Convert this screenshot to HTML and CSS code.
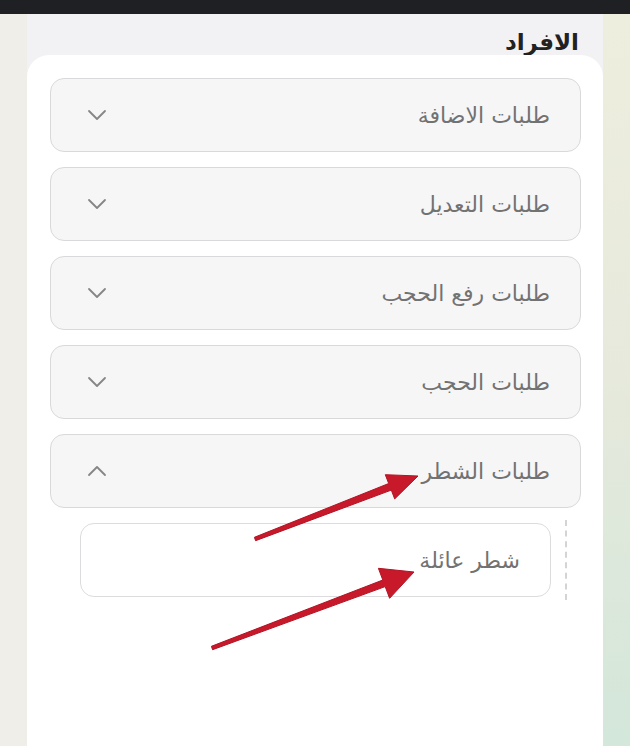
FILE: index.html
```html
<!DOCTYPE html>
<html dir="rtl" lang="ar">
<head>
	<meta charset="utf-8">
	<link rel="stylesheet" href="styles.css">
</head>
<body>
	<div class="statusBar"></div>

	<div class="screen">
		<div class="sideLeft"></div>

		<div class="panel">
			<h1 class="title">الافراد</h1>

			<div class="card">
				<div class="list">
					<div class="item">
						<span class="label">طلبات الاضافة</span>
						<svg class="chev" width="20" height="12" viewBox="0 0 20 12"><polyline points="2,2 10,10 18,2" /></svg>
					</div>
					<div class="item">
						<span class="label">طلبات التعديل</span>
						<svg class="chev" width="20" height="12" viewBox="0 0 20 12"><polyline points="2,2 10,10 18,2" /></svg>
					</div>
					<div class="item">
						<span class="label">طلبات رفع الحجب</span>
						<svg class="chev" width="20" height="12" viewBox="0 0 20 12"><polyline points="2,2 10,10 18,2" /></svg>
					</div>
					<div class="item">
						<span class="label">طلبات الحجب</span>
						<svg class="chev" width="20" height="12" viewBox="0 0 20 12"><polyline points="2,2 10,10 18,2" /></svg>
					</div>
					<div class="item">
						<span class="label">طلبات الشطر</span>
						<svg class="chev" width="20" height="12" viewBox="0 0 20 12"><polyline points="2,10 10,2 18,10" /></svg>
					</div>
				</div>

				<div class="subList">
					<div class="subItem">
						<span class="label">شطر عائلة</span>
					</div>
				</div>
			</div>
		</div>

		<div class="sideRight"></div>
	</div>

	<!-- red annotation arrows drawn over the page -->
	<svg class="arrows" width="630" height="746" viewBox="0 0 630 746">
		<polygon points="254.4,537.3 388.7,483.5 385.3,474.7 418,476 394.7,498.9 391.3,490.1 255.6,540.7" />
		<polygon points="211.4,646.3 382.8,580.0 378.4,568.3 414,572 389.6,598.3 385.2,586.6 212.6,649.7" />
	</svg>
</body>
</html>
```

FILE: styles.css
```css
* {
	box-sizing: border-box;
}

html, body {
	margin: 0;
	padding: 0;
	height: 746px;
	overflow: hidden;
}

body {
	font-family: "DejaVu Sans", sans-serif;
	background: #efeee9;
	position: relative;
}

.statusBar {
	height: 14px;
	background: #1f2023;
}

.screen {
	display: flex;
	flex-direction: row-reverse;
	height: 732px;
}

.sideLeft {
	width: 27px;
	background: #efeee8;
}

.sideRight {
	width: 27px;
	background: linear-gradient(to bottom, #eeeede 0%, #e6e9dc 50%, #d3e7da 100%);
}

.panel {
	width: 576px;
	background: #f2f2f4;
	display: flex;
	flex-direction: column;
}

.title {
	margin: 0;
	height: 41px;
	padding: 14px 24px 0 0;
	font-size: 23px;
	font-weight: bold;
	line-height: 28px;
	color: #222;
}

.card {
	flex: 1;
	background: #fff;
	border-radius: 22px 22px 0 0;
	padding: 23px 22px 0 23px;
}

.list {
	display: flex;
	flex-direction: column;
	gap: 15px;
}

.item {
	height: 74px;
	display: flex;
	align-items: center;
	justify-content: space-between;
	padding: 0 30px 0 36px;
	background: #f6f6f7;
	border: 1px solid #d9d9dc;
	border-radius: 14px;
}

.label {
	font-size: 22px;
	color: #727272;
}

.chev {
	fill: none;
	stroke: #858585;
	stroke-width: 1.8;
	stroke-linecap: round;
	stroke-linejoin: round;
}

.subList {
	margin: 12px 14px 0 30px;
	padding: 3px 14px 3px 0;
	border-right: 2px dashed #d4d4d4;
}

.subItem {
	height: 74px;
	display: flex;
	align-items: center;
	padding: 0 30px 0 0;
	background: #fff;
	border: 1px solid #dcdcdf;
	border-radius: 14px;
}

.arrows {
	position: absolute;
	left: 0;
	top: 0;
	fill: #c8192b;
	stroke: #b01424;
	stroke-width: 1;
	stroke-linejoin: round;
}
```
